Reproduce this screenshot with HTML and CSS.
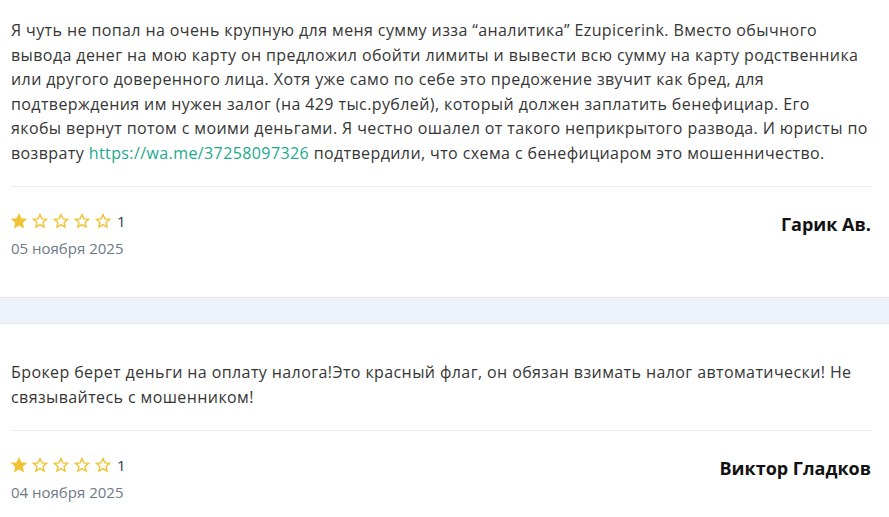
FILE: index.html
```html
<!DOCTYPE html>
<html lang="ru">
<head>
    <meta charset="UTF-8">
    <meta name="viewport" content="width=device-width, initial-scale=1.0">
    <title>Отзывы</title>
    <link rel="stylesheet" href="styles.css">
</head>
<body>
    <svg width="0" height="0" class="defs">
        <symbol id="star" viewBox="0 0 24 24">
            <path d="M12 2.2l2.9 6.6 7.1.6-5.4 4.7 1.6 7-6.2-3.7-6.2 3.7 1.6-7L2 9.4l7.1-.6z"/>
        </symbol>
    </svg>

    <main class="reviews">
        <article class="review review-first">
            <p class="review-text">Я чуть не попал на очень крупную для меня сумму изза “аналитика” Ezupicerink. Вместо обычного вывода денег на мою карту он предложил обойти лимиты и вывести всю сумму на карту родственника или другого доверенного лица. Хотя уже само по себе это предожение звучит как бред, для подтверждения им нужен залог (на 429 тыс.рублей), который должен заплатить бенефициар. Его якобы&nbsp;вернут потом с моими деньгами. Я честно ошалел от такого неприкрытого развода. И юристы по возврату <a href="#">https://wa.me/37258097326</a> подтвердили, что схема с бенефициаром это мошенничество.</p>
            <div class="review-footer">
                <div class="review-meta">
                    <div class="rating">
                        <svg class="star filled"><use href="#star"/></svg>
                        <svg class="star"><use href="#star"/></svg>
                        <svg class="star"><use href="#star"/></svg>
                        <svg class="star"><use href="#star"/></svg>
                        <svg class="star"><use href="#star"/></svg>
                        <span class="rating-value">1</span>
                    </div>
                    <div class="review-date">05 ноября 2025</div>
                </div>
                <div class="review-author">Гарик Ав.</div>
            </div>
        </article>

        <div class="separator"></div>

        <article class="review">
            <p class="review-text">Брокер берет деньги на оплату налога!Это красный флаг, он обязан взимать налог автоматически! Не связывайтесь с мошенником!</p>
            <div class="review-footer">
                <div class="review-meta">
                    <div class="rating">
                        <svg class="star filled"><use href="#star"/></svg>
                        <svg class="star"><use href="#star"/></svg>
                        <svg class="star"><use href="#star"/></svg>
                        <svg class="star"><use href="#star"/></svg>
                        <svg class="star"><use href="#star"/></svg>
                        <span class="rating-value">1</span>
                    </div>
                    <div class="review-date">04 ноября 2025</div>
                </div>
                <div class="review-author">Виктор Гладков</div>
            </div>
        </article>
    </main>
</body>
</html>
```

FILE: styles.css
```css
body {
    margin: 0;
    padding: 0;
    background: #fff;
    font-family: "Open Sans", "Noto Sans", sans-serif;
    color: #363636;
}
.defs {
    position: absolute;
}
.review {
    padding: 36px 18px 39px 11px;
}
.review-first {
    padding-top: 18px;
}
.review-text {
    margin: 0;
    padding-bottom: 21px;
    font-size: 16px;
    line-height: 24.5px;
    letter-spacing: 0.4px;
    border-bottom: 1px solid #ececec;
}
.review-text a {
    color: #22a98b;
    text-decoration: none;
}
.review-footer {
    display: flex;
    justify-content: space-between;
    align-items: flex-start;
    padding-top: 23px;
}
.rating {
    display: flex;
    align-items: center;
    gap: 5px;
    height: 22px;
}
.star {
    width: 16px;
    height: 16px;
    fill: none;
    stroke: #f1c232;
    stroke-width: 2;
}
.star.filled {
    fill: #f1c232;
}
.rating-value {
    margin-left: 1px;
    font-size: 15px;
    color: #2c3e50;
}
.review-date {
    margin-top: 6px;
    font-size: 15px;
    color: #6d7a87;
}
.review-author {
    margin-top: 2px;
    font-size: 18px;
    font-weight: 700;
    color: #121212;
}
.separator {
    height: 25px;
    background: #eef3fb;
    border-top: 1px solid #e6e8eb;
    border-bottom: 1px solid #e6e8eb;
}
```
